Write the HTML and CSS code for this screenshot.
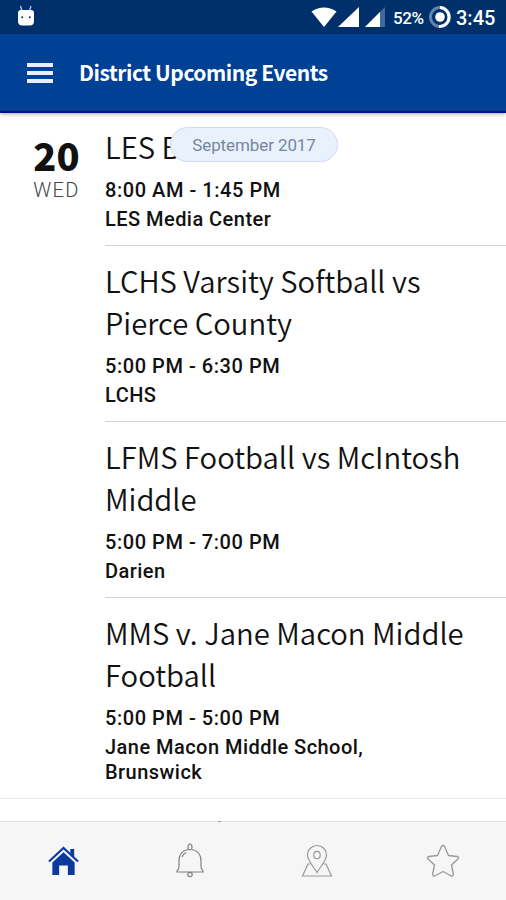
FILE: index.html
```
<!DOCTYPE html>
<html lang="en">
<head>
    <meta charset="UTF-8">
    <meta name="viewport" content="width=device-width, initial-scale=1.0">
    <title>District Upcoming Events</title>
    <link rel="stylesheet" href="styles.css">
</head>
<body>
    <div class="status-bar">
        <svg class="android-icon" width="18" height="22" viewBox="0 0 18 22">
            <path d="M3.5 1l1.500 5M14 1l-1.500 5" stroke="#b8cbe2" stroke-width="1.3"/>
            <path d="M1 8q0-3 3-3h10q3 0 3 3v8q0 4.500-4.500 4.500h-7Q1 20.500 1 16z" fill="#fff"/>
            <circle cx="5.2" cy="12.2" r="1" fill="#00306b"/>
            <circle cx="12.8" cy="12.2" r="1" fill="#00306b"/>
        </svg>
        <div class="status-right">
            <svg width="76" height="22" viewBox="0 0 76 22">
                <path d="M.5 5.5Q13-2.500 25.500 5.500L13 21z" fill="#fff"/>
                <path d="M48 1v20H27z" fill="#fff"/>
                <path d="M74 1v20H54z" fill="#3f6b9a"/>
                <path d="M69 6v15H54z" fill="#fff"/>
            </svg>
            <span class="battery-text">52%</span>
            <svg class="battery-ring" width="24" height="24" viewBox="0 0 24 24">
                <circle cx="12" cy="12" r="9.500" fill="none" stroke="#5d86ad" stroke-width="3"/>
                <path d="M12 2.500a9.500 9.500 0 1 1-1 19" fill="none" stroke="#fff" stroke-width="3"/>
                <circle cx="12" cy="12" r="4.800" fill="#fff"/>
            </svg>
            <span class="clock">3:45</span>
        </div>
    </div>

    <header class="header">
        <div class="menu">
            <span></span>
            <span></span>
            <span></span>
        </div>
        <h1>District Upcoming Events</h1>
    </header>

    <main class="day">
        <div class="month">September 2017</div>
        <div class="date">
            <div class="date-number">20</div>
            <div class="date-name">WED</div>
        </div>
        <div class="events">
            <div class="event">
                <h2>LES B</h2>
                <p class="time">8:00 AM - 1:45 PM</p>
                <p class="place">LES Media Center</p>
            </div>
            <div class="event">
                <h2>LCHS Varsity Softball vs<br>Pierce County</h2>
                <p class="time">5:00 PM - 6:30 PM</p>
                <p class="place">LCHS</p>
            </div>
            <div class="event">
                <h2>LFMS Football vs McIntosh<br>Middle</h2>
                <p class="time">5:00 PM - 7:00 PM</p>
                <p class="place">Darien</p>
            </div>
            <div class="event">
                <h2>MMS v. Jane Macon Middle<br>Football</h2>
                <p class="time">5:00 PM - 5:00 PM</p>
                <p class="place">Jane Macon Middle School,<br>Brunswick</p>
            </div>
        </div>
    </main>

    <nav class="tabs">
        <div class="tab">
            <svg width="31" height="33" viewBox="0 0 32 34" fill="#0a3a9c">
                <path d="M23 4h4v9l-4-4z"/>
                <path d="M1 17L16 3l15 14" fill="none" stroke="#0a3a9c" stroke-width="2.200"/>
                <path d="M16 7.500L27.500 18v13H20.500V21h-9v10H4.500V18z"/>
            </svg>
        </div>
        <div class="tab bell">
            <svg width="32" height="36" viewBox="0 0 32 36" fill="none" stroke="#808080" stroke-width="1.200">
                <ellipse cx="16" cy="4" rx="2" ry="3"/>
                <path d="M14 6.500C7 8 5 13 5 18v6q0 2-2 4v1h26v-1q-2-2-2-4v-6c0-5-2-10-9-11.500"/>
                <path d="M8 14q1-3 4-4.500"/>
                <circle cx="16" cy="31.500" r="2.200"/>
            </svg>
        </div>
        <div class="tab">
            <svg width="32" height="34" viewBox="0 0 32 34" fill="none" stroke="#999" stroke-width="1.200">
                <path d="M16 28.500C13 23 6.500 17 6.500 11a9.500 9.500 0 0 1 19 0c0 6-6.500 12-9.500 17.500z"/>
                <ellipse cx="16" cy="11" rx="3.200" ry="3.700"/>
                <path d="M9 20H7L1.500 32h29L25 20h-2"/>
            </svg>
        </div>
        <div class="tab">
            <svg width="34" height="34" viewBox="0 0 34 34" fill="none" stroke="#999" stroke-width="1.300" stroke-linejoin="round">
                <path d="M15.500 2.500q1.500-2 3 0l4 9 8.500 1q2.500.5 1 2.500l-6.500 6 1.800 9q0 2.500-2 2L17 27.500 8.700 32q-2 .5-2-2l1.800-9L2 15q-1.500-2 1-2.500l8.500-1z"/>
            </svg>
        </div>
    </nav>
</body>
</html>
```
FILE: styles.css
```
* {
    box-sizing: border-box;
}
body {
    margin: 0;
    height: 900px;
    display: flex;
    flex-direction: column;
    background: #fff;
    color: #111;
    font-family: Roboto, sans-serif;
    overflow: hidden;
}
svg {
    display: block;
}
.status-bar {
    height: 34px;
    flex: none;
    display: flex;
    align-items: center;
    justify-content: space-between;
    padding: 0 11px 0 17px;
    background: #00306b;
    color: #fff;
}
.android-icon {
    margin-bottom: 2px;
}
.status-right {
    display: flex;
    align-items: center;
}
.battery-text {
    margin-left: 6px;
    padding-top: 2px;
    width: 31px;
    font-size: 17px;
    font-weight: 500;
    letter-spacing: -0.4px;
}
.battery-ring {
    margin: 0 4px 0 4px;
}
.clock {
    padding-top: 2px;
    width: 39px;
    font-size: 20px;
    font-weight: 500;
}
.header {
    height: 79px;
    flex: none;
    display: flex;
    align-items: center;
    padding-left: 27px;
    background: #004095;
    border-bottom: 2px solid #00108a;
    box-shadow: 0 1px 4px rgba(0,0,0,0.35);
}
.menu {
    display: flex;
    flex-direction: column;
    gap: 4px;
    width: 26px;
    margin-right: 26px;
}
.menu span {
    height: 4px;
    background: #e8edfb;
}
.header h1 {
    margin: 0 0 1px;
    color: #fff;
    font-family: "Noto Sans CJK JP", sans-serif;
    font-size: 21px;
    font-weight: 700;
    line-height: 30px;
    letter-spacing: -0.45px;
}
.day {
    position: relative;
    display: flex;
    margin-top: -1px;
    border-bottom: 1px solid #e6e6e6;
}
.month {
    position: absolute;
    top: 15px;
    left: 170px;
    width: 168px;
    height: 35px;
    border: 1px solid #cfdcf0;
    border-radius: 18px;
    background: #e9f1fd;
    color: #76879e;
    font-size: 17px;
    line-height: 35px;
    letter-spacing: -0.1px;
    text-align: center;
}
.date {
    width: 105px;
    padding: 22px 0 0 8px;
    text-align: center;
}
.date-number {
    font-family: "Noto Sans CJK JP", sans-serif;
    font-size: 38px;
    font-weight: 900;
    line-height: 42px;
}
.date-name {
    margin-top: 2px;
    color: #444;
    font-size: 20px;
    font-weight: 300;
    line-height: 24px;
    letter-spacing: 1.3px;
}
.events {
    flex: 1;
}
.event {
    padding: 13px 0;
    border-bottom: 1px solid #d4d4d4;
}
.event:last-child {
    border-bottom: none;
}
.event h2 {
    margin: 0 0 11px;
    font-family: "Noto Sans CJK JP", sans-serif;
    font-size: 29.25px;
    font-weight: 350;
    line-height: 42px;
    white-space: nowrap;
}
.event p {
    margin: 0;
    font-size: 20px;
    font-weight: 500;
    line-height: 25px;
    letter-spacing: 0.46px;
}
.event .time {
    margin-bottom: 4px;
    letter-spacing: 0.55px;
}
.tabs {
    position: relative;
    flex: none;
    display: flex;
    height: 79px;
    margin-top: auto;
    background: #f6f6f6;
    border-top: 1px solid #e2e2e2;
}
/* tip of the next event title */
.tabs::before {
    content: "";
    position: absolute;
    top: -1px;
    left: 218px;
    width: 3px;
    height: 1px;
    background: #999;
}
.tab {
    flex: 1;
    display: flex;
    align-items: center;
    justify-content: center;
}
.bell {
    padding-left: 1px;
}
```
